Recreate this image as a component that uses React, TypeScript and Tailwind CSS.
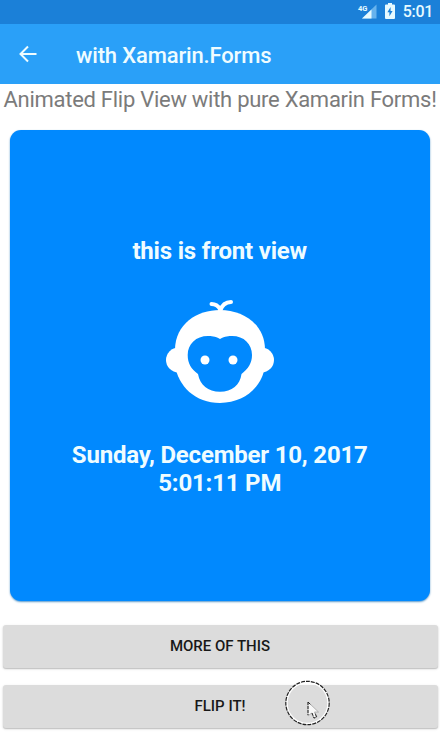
import React from "react";

function StatusBar() {
  return (
    <div className="flex h-6 shrink-0 items-center justify-end bg-[#1b80d8] pr-2 text-[#e6faff]">
      <svg width="20" height="18" viewBox="0 0 20 18" className="mr-[8px]">
        <path d="M19.500 1.500V15.500H5Z" fill="#68b3ed" />
        <path d="M14.500 6.500V15.500H5Z" fill="#e6faff" />
        <text x="1" y="7.500" fontSize="7.500" fontWeight="700" fill="#e6faff" fontFamily="Roboto, sans-serif">4G</text>
      </svg>
      <svg width="10" height="16" viewBox="0 0 10 16" className="mr-[8px] -mt-0.5">
        <path d="M3 0H7V1.5H9Q10 1.5 10 2.5V15Q10 16 9 16H1Q0 16 0 15V2.500Q0 1.500 1 1.500H3Z" fill="#e6faff" />
        <path d="M5.600 4L2.400 9.200H4.400V13.200L7.600 7.900H5.600Z" fill="#1b80d8" />
      </svg>
      <span className="-mr-px text-[16px] font-medium leading-6 tracking-[-0.3px]">5:01</span>
    </div>
  );
}

function Monkey() {
  return (
    <svg width="130" height="125" viewBox="0 0 130 125" className="block">
      <g fill="#fff">
        <circle cx="23.500" cy="70" r="12.500" />
        <circle cx="106.500" cy="70" r="12.500" />
        <path d="M65 20C88 20 110 34 110 60V75C108 96 90 113 65 113S23 96 20 75V60C20 34 42 20 65 20Z" />
      </g>
      <path d="M65 22V19C63 15.500 61 14 56.500 14M65 21C67 15 70 12 76 12" fill="none" stroke="#fff" strokeWidth="4" strokeLinecap="round" />
      <path d="M65 49C60 46 56 46 53 46C41 46 32.700 54 32.700 65C32.700 73 36 79 43 84C45 95 53 101.700 65 101.700S85 95 86.500 84C93 79 97 73 97 65C97 54 89 46 77 46C74 46 70 46 65 49Z" fill="#0189fe" />
      <circle cx="50" cy="70" r="4.500" fill="#fff" />
      <circle cx="78" cy="70" r="4.500" fill="#fff" />
    </svg>
  );
}

function ActionButton({ children }: { children: React.ReactNode }) {
  return (
    <button className="flex h-[43px] shrink-0 items-center justify-center rounded-[3px] bg-[#dcdcdc] text-[15px] font-medium text-[#181818] shadow-[0_1px_1px_#c4c4c4,0_1px_3px_#ddd]">
      {children}
    </button>
  );
}

function TouchPointer() {
  return (
    <svg width="46" height="46" viewBox="0 0 46 46" className="absolute left-[284px] top-[680px]">
      <circle cx="23.500" cy="23" r="20.800" fill="none" stroke="#fff" strokeWidth="2" />
      <circle cx="23.500" cy="23" r="21.700" fill="none" stroke="#222" strokeWidth="1.200" strokeDasharray="4 1" />
      <path d="M24 22V36L27.500 33L30 38.500L33 37L30.500 32H34.500Z" fill="#f8f8f8" stroke="#999" strokeWidth=".7" />
      <path d="M24 22V35M24 22L27 25M28 33L30 38L32.500 37L31 33" fill="none" stroke="#222" strokeWidth="1" strokeDasharray="3 1" />
    </svg>
  );
}

export default function App() {
  return (
    <div className="relative flex h-[732px] w-[440px] flex-col overflow-hidden bg-white font-['Roboto',sans-serif]">
      <StatusBar />
      <header className="flex h-[60px] shrink-0 items-center bg-[#2aa0f8] text-[#effcff]">
        <svg width="18" height="18" viewBox="0 0 18 18" className="ml-[19px] mr-[39px]">
          <path d="M17.500 9H2M9 1.500L1.500 9L9 16.500" fill="none" stroke="currentColor" strokeWidth="2" />
        </svg>
        <h1 className="pt-0.5 text-[22px] font-medium tracking-[-0.15px]">with Xamarin.Forms</h1>
      </header>
      <p className="flex h-[46px] shrink-0 justify-center whitespace-nowrap text-[22px] leading-8 tracking-[-0.27px] text-[#7b7b7b]">
        Animated Flip View with pure Xamarin Forms!
      </p>
      <main className="ml-[9.5px] mr-[10px] flex h-[471px] shrink-0 flex-col items-center rounded-[11px] bg-[#0189fe] text-center text-2xl font-bold tracking-[-0.19px] text-[#effcff] shadow-[0_1px_2px_#5797c9]">
        <h2 className="mt-[107px] h-[53px] leading-7">this is front view</h2>
        <Monkey />
        <p className="mt-[26px] leading-7">
          Sunday, December 10, 2017
          <br />
          5:01:11 PM
        </p>
      </main>
      <div className="mx-[2.5px] mt-6 flex flex-col gap-[17px]">
        <ActionButton>MORE OF THIS</ActionButton>
        <ActionButton>FLIP IT!</ActionButton>
      </div>
      <TouchPointer />
    </div>
  );
}
